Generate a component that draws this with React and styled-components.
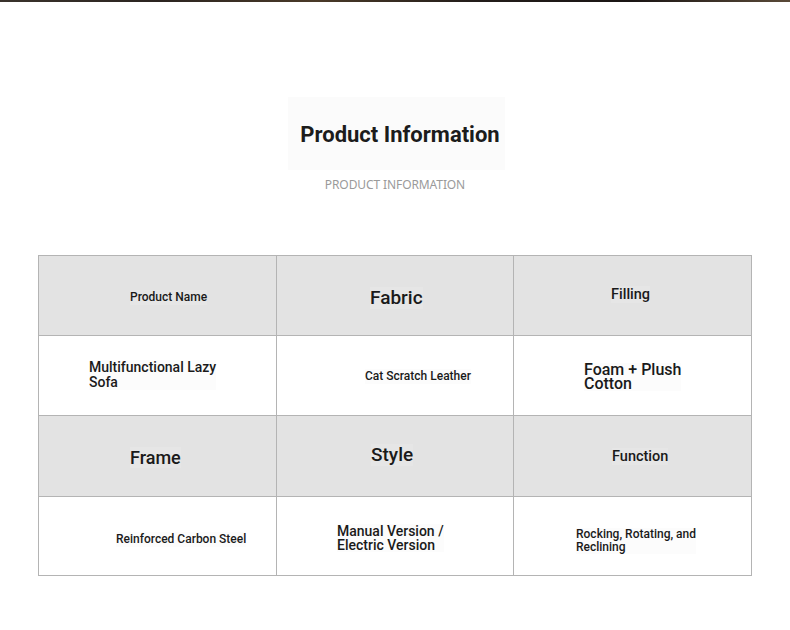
import React from "react";
import styled, { createGlobalStyle } from "styled-components";

const Global = createGlobalStyle`
  html, body { margin: 0; padding: 0; background: #fff; }
  body { font-family: Roboto, "Liberation Sans", sans-serif; color: #111; }
`;

const Page = styled.div`
  width: 790px;
  min-height: 630px;
  background: #fff;
`;

const TopBand = styled.div`
  height: 2px;
  background: linear-gradient(90deg, #3a332c 0%, #2b2420 20%, #4a3a28 40%, #231d1a 60%, #1a1514 80%, #5a4a38 100%);
`;

const Header = styled.header`
  display: flex;
  flex-direction: column;
  align-items: center;
  padding-top: 95px;
`;

const TitleBox = styled.div`
  width: 217px;
  height: 73px;
  margin-left: 3px;
  background: #fbfbfb;
  display: flex;
  align-items: center;
  justify-content: center;
`;

const Title = styled.h1`
  margin: 2px 0 0 7px;
  font-family: Roboto, "Liberation Sans", sans-serif;
  font-weight: 700;
  font-size: 22px;
  line-height: 24px;
  color: #1c1c1c;
  white-space: nowrap;
`;

const Subtitle = styled.div`
  margin-top: 7px;
  margin-left: 0;
  font-family: "Noto Sans", "Open Sans", sans-serif;
  font-size: 12px;
  line-height: 16px;
  color: #9a9a9a;
  letter-spacing: -0.1px;
`;

const Table = styled.div`
  margin: 62px 0 0 38px;
  display: grid;
  grid-template-columns: 238px 237px 238px;
  grid-template-rows: 80px 80px 81px 79px;
  width: max-content;
  border-left: 1px solid #b4b4b4;
  border-top: 1px solid #b4b4b4;
`;

const Cell = styled.div`
  box-sizing: border-box;
  border-right: 1px solid #b4b4b4;
  border-bottom: 1px solid #b4b4b4;
  background: ${(p) => (p.$head ? "#e3e3e3" : "#ffffff")};
  display: flex;
  align-items: center;
  padding-left: ${(p) => p.$left}px;
  padding-top: ${(p) => (p.$dy > 0 ? p.$dy * 2 : 0)}px;
  padding-bottom: ${(p) => (p.$dy < 0 ? -p.$dy * 2 : 0)}px;
`;

const Label = styled.span`
  font-family: Roboto, "Liberation Sans", sans-serif;
  font-weight: 500;
  font-size: ${(p) => p.$size}px;
  line-height: ${(p) => p.$lh}px;
  color: #1a1a1a;
  white-space: pre-line;
  background: ${(p) => (p.$head ? "#e6e6e6" : "#fcfcfc")};
`;

const cells = [
  { t: "Product Name", head: true, left: 91, dy: 2, size: 12, lh: 15 },
  { t: "Fabric", head: true, left: 93, dy: 2, size: 19, lh: 22 },
  { t: "Filling", head: true, left: 97, dy: -1, size: 14.5, lh: 17 },
  { t: "Multifunctional Lazy\nSofa", left: 50, dy: -0.5, size: 14, lh: 15 },
  { t: "Cat Scratch Leather", left: 88, dy: 1, size: 12, lh: 15 },
  { t: "Foam + Plush\nCotton", left: 70, dy: 1, size: 16, lh: 14 },
  { t: "Frame", head: true, left: 91, dy: 1.5, size: 18, lh: 21 },
  { t: "Style", head: true, left: 94, dy: -1, size: 19, lh: 22 },
  { t: "Function", head: true, left: 98, dy: 0.5, size: 14.5, lh: 17 },
  { t: "Reinforced Carbon Steel", left: 77, dy: 3.5, size: 12, lh: 15 },
  { t: "Manual Version /\nElectric Version", left: 60, dy: 2, size: 14, lh: 14 },
  { t: "Rocking, Rotating, and\nReclining", left: 62, dy: 5, size: 12, lh: 13 },
];

export default function App() {
  return (
    <Page>
      <Global />
      <TopBand />
      <Header>
        <TitleBox>
          <Title>Product Information</Title>
        </TitleBox>
        <Subtitle>PRODUCT INFORMATION</Subtitle>
      </Header>
      <Table>
        {cells.map((c, i) => (
          <Cell key={i} $head={c.head} $left={c.left} $dy={c.dy}>
            <Label $size={c.size} $lh={c.lh} $head={c.head}>
              {c.t}
            </Label>
          </Cell>
        ))}
      </Table>
    </Page>
  );
}
